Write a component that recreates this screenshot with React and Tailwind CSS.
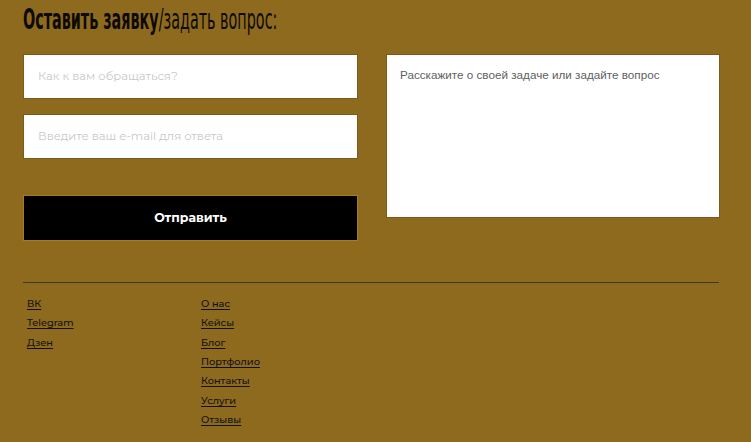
export default function App() {
  const social = ["ВК", "Telegram", "Дзен"];
  const nav = ["О нас", "Кейсы", "Блог", "Портфолио", "Контакты", "Услуги", "Отзывы"];
  const mont = "font-['Montserrat','Open_Sans','DejaVu_Sans',sans-serif]";
  return (
    <div className="w-[751px] h-[442px] overflow-hidden bg-[#8e6a1f] pl-[23px] pr-[31px]">
      <h2 className="h-[46px] pt-[3px] font-['DejaVu_Sans_Condensed',sans-serif] text-[28px] leading-[34px] text-[#0d0a05] whitespace-nowrap origin-left scale-x-[0.57] w-[600px]">
        <span className="font-bold">Оставить заявку</span>
        <span className="font-light">/задать вопрос:</span>
      </h2>
      <div className="flex gap-[28px] mt-[8px]">
        <div className="w-[335px] flex flex-col">
          <div className="h-[45px] bg-white border border-[#7c5a16] flex items-center pl-[14px]">
            <span className={`${mont} text-[11.6px] text-[#c8c8c8]`}>Как к вам обращаться?</span>
          </div>
          <div className="h-[45px] mt-[15px] bg-white border border-[#7c5a16] flex items-center pl-[14px]">
            <span className={`${mont} text-[11.6px] text-[#c8c8c8]`}>Введите ваш e-mail для ответа</span>
          </div>
          <div className="h-[46px] mt-[36px] bg-black border border-[#a87c22] flex items-center justify-center">
            <span className={`${mont} text-[12.5px] font-bold text-white`}>Отправить</span>
          </div>
        </div>
        <div className="w-[334px] h-[164px] bg-white border border-[#7c5a16] px-[13px] pt-[13px]">
          <div className="font-['Liberation_Sans',Arial,sans-serif] text-[11.7px] leading-[14px] text-[#5f5f5f]">
            Расскажите о своей задаче или задайте вопрос
          </div>
        </div>
      </div>
      <div className="mt-[41px] h-[1px] bg-[#3f3a2e] w-[696px]" />
      <div className="flex pt-[11px] pl-[4px]">
        <div className="w-[174px] flex flex-col">
          {social.map((s) => (
            <a key={s} className={`${mont} text-[9.8px] font-medium leading-[19.33px] text-[#111] underline underline-offset-2`}>{s}</a>
          ))}
        </div>
        <div className="flex flex-col">
          {nav.map((s) => (
            <a key={s} className={`${mont} text-[9.8px] font-medium leading-[19.33px] text-[#111] underline underline-offset-2`}>{s}</a>
          ))}
        </div>
      </div>
    </div>
  );
}
